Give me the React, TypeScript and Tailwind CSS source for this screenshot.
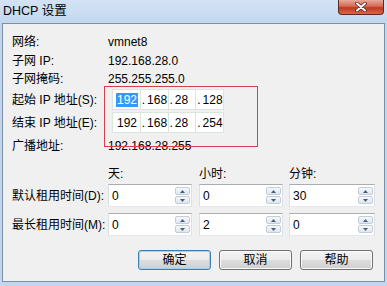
import React from "react";

const font = { fontFamily: '"Liberation Sans", "Noto Sans CJK SC", sans-serif' };

const Spinner = () => (
  <div className="flex flex-col gap-px py-[2px] pr-px">
    {[0, 1].map((i) => (
      <div
        key={i}
        className="w-[15px] h-[8px] border border-[#c3ccd9] rounded-[2px] bg-[linear-gradient(#f6f8fb,#dfe6ef)] flex items-center justify-center"
      >
        <svg width="5" height="3" viewBox="0 0 5 3">
          {i === 0 ? (
            <path d="M2.5 0L5 3H0z" fill="#4a5d80" />
          ) : (
            <path d="M0 0H5L2.5 3z" fill="#4a5d80" />
          )}
        </svg>
      </div>
    ))}
  </div>
);

const SpinBox = ({ value, w }: { value: string; w: string }) => (
  <div className={`${w} h-[23px] flex border border-[#abadb3] border-b-[#e3e9ef] border-x-[#dbdfe6] bg-white`}>
    <div className="flex-1 pl-[3px] flex items-center text-[12px] text-black">{value}</div>
    <Spinner />
  </div>
);

const IpBox = ({ parts, selectFirst }: { parts: string[]; selectFirst?: boolean }) => (
  <div className="ml-[4px] w-[112px] h-[21px] bg-[#dbe6db] p-px flex gap-px">
    {parts.map((p, i) => (
      <div key={i} className="flex-1 bg-white flex items-center text-[12px] text-black">
        {i === 0 ? (
          <span className="pl-[3px]">
            <span className={selectFirst ? "bg-[#3399ff] text-white px-px" : "px-px"}>{p}</span>
          </span>
        ) : (
          <>
            <span className="pl-px">.</span>
            <span className="pl-[2px]">{p}</span>
          </>
        )}
      </div>
    ))}
  </div>
);

const Button = ({ label, focused }: { label: string; focused?: boolean }) => (
  <button
    className={`w-[73px] h-[20px] rounded-[3px] border text-[12px] text-black flex items-center justify-center bg-[linear-gradient(#f3f3f3_0%,#ebebeb_50%,#dddddd_51%,#cfcfcf_100%)] ${
      focused ? "border-[#3c7fb1] shadow-[inset_0_0_0_1px_#9fd3f3]" : "border-[#707070] shadow-[inset_0_0_0_1px_#fbfbfb]"
    }`}
  >
    {label}
  </button>
);

const Row = ({ label, children, h }: { label: string; children?: React.ReactNode; h: string }) => (
  <div className={`${h} flex items-center`}>
    <div className="w-[96px] text-[12px] text-black whitespace-nowrap">{label}</div>
    {children}
  </div>
);

export default function App() {
  return (
    <div className="relative w-[387px] h-[286px] overflow-hidden flex flex-col bg-[#c2d7ed]" style={font}>
      {/* title bar */}
      <div className="h-[23px] flex items-start bg-[linear-gradient(#d3e3f4,#c2d7ed)]">
        <div className="pl-[3px] pt-[2px] text-[12.5px] text-black">DHCP 设置</div>
        <div className="ml-auto mr-[3px] w-[46px] h-[15px] rounded-b-[4px] border border-t-0 border-[#5c2b24] bg-[linear-gradient(#e9a898_0%,#d26a57_45%,#c0391f_55%,#d9664a_100%)] flex items-center justify-center">
          <svg width="12" height="10" viewBox="0 0 12 10">
            <path d="M2 1.5L10 8.5M10 1.5L2 8.5" stroke="#5a2520" strokeWidth="3.6" strokeLinecap="round" />
            <path d="M2 1.5L10 8.5M10 1.5L2 8.5" stroke="#ffffff" strokeWidth="2" strokeLinecap="round" />
          </svg>
        </div>
      </div>

      {/* client area */}
      <div className="mx-[2px] mb-[4px] flex-1 border border-[#7c8fa6] bg-[#f0f0f0] pl-[9px] pt-[9px] flex flex-col">
        <Row label="网络:" h="h-[18px]">
          <span className="text-[12px] text-black">vmnet8</span>
        </Row>
        <Row label="子网 IP:" h="h-[19px]">
          <span className="text-[12px] text-black">192.168.28.0</span>
        </Row>
        <Row label="子网掩码:" h="h-[18px]">
          <span className="text-[12px] text-black">255.255.255.0</span>
        </Row>
        <Row label="起始 IP 地址(S):" h="h-[23px]">
          <IpBox parts={["192", "168", "28", "128"]} selectFirst />
        </Row>
        <Row label="结束 IP 地址(E):" h="h-[23px]">
          <IpBox parts={["192", "168", "28", "254"]} />
        </Row>
        <Row label="广播地址:" h="h-[23px]">
          <span className="text-[12px] text-black">192.168.28.255</span>
        </Row>

        <div className="mt-[8px] h-[18px] flex items-center text-[12px] text-black">
          <div className="w-[96px]" />
          <div className="w-[84px] mr-[7px]">天:</div>
          <div className="w-[84px] mr-[6px]">小时:</div>
          <div className="w-[86px]">分钟:</div>
        </div>

        <div className="mt-[1px] flex items-center">
          <div className="w-[96px] text-[12px] text-black whitespace-nowrap">默认租用时间(D):</div>
          <div className="mr-[7px]"><SpinBox value="0" w="w-[84px]" /></div>
          <div className="mr-[6px]"><SpinBox value="0" w="w-[84px]" /></div>
          <SpinBox value="30" w="w-[86px]" />
        </div>

        <div className="mt-[6px] flex items-center">
          <div className="w-[96px] text-[12px] text-black whitespace-nowrap">最长租用时间(M):</div>
          <div className="mr-[7px]"><SpinBox value="0" w="w-[84px]" /></div>
          <div className="mr-[6px]"><SpinBox value="2" w="w-[84px]" /></div>
          <SpinBox value="0" w="w-[86px]" />
        </div>

        <div className="mt-[14px] flex justify-end gap-[8px] pr-[11px]">
          <Button label="确定" focused />
          <Button label="取消" />
          <Button label="帮助" />
        </div>
      </div>

      {/* red annotation rectangle */}
      <div className="absolute left-[104px] top-[86px] w-[154px] h-[61px] border border-[#d6404c] pointer-events-none" />
    </div>
  );
}
